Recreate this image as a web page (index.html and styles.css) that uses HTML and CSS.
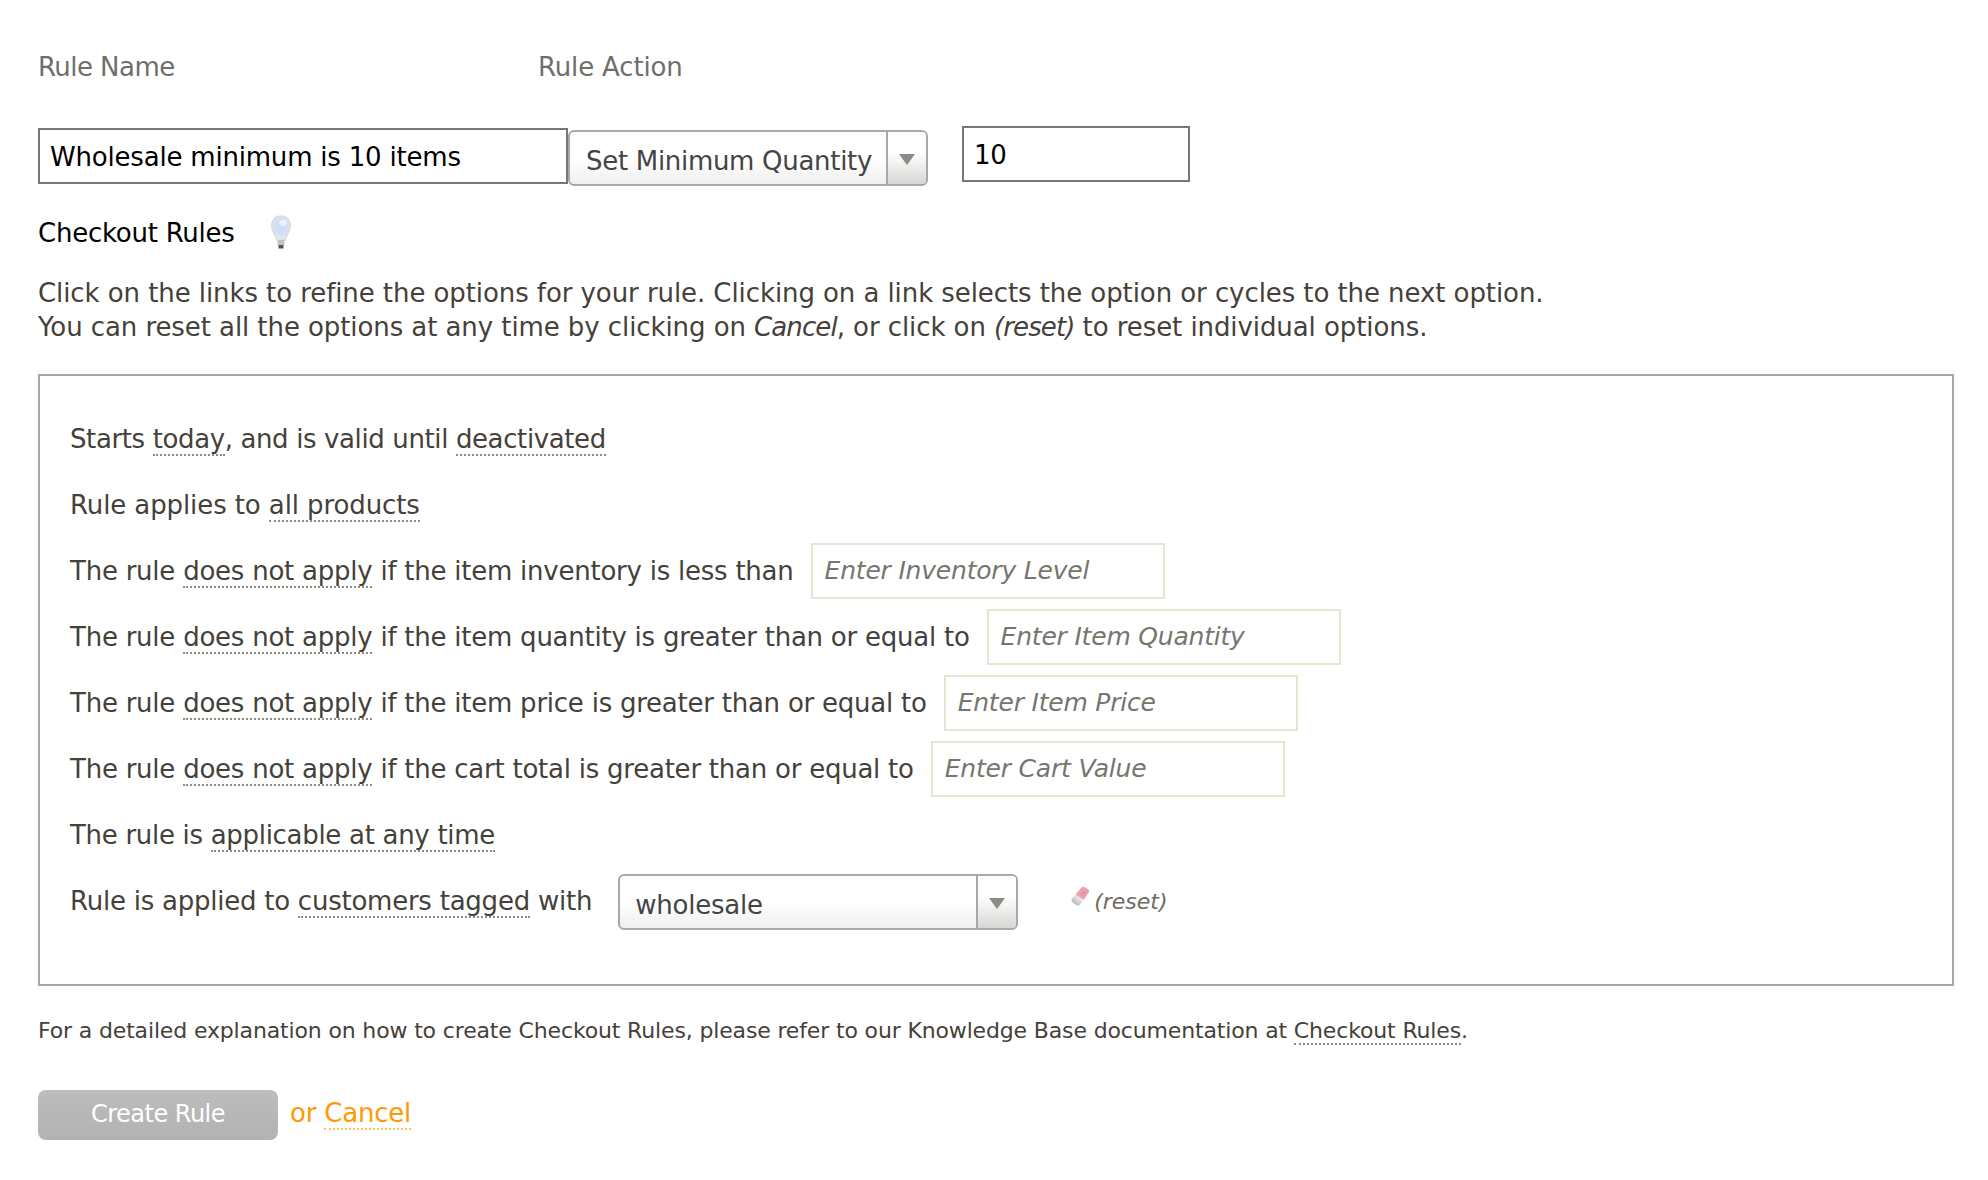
FILE: index.html
```html
<!DOCTYPE html>
<html lang="en">
<head>
<meta charset="utf-8">
<title>Checkout Rules</title>
<link rel="stylesheet" href="styles.css">
</head>
<body>
<form class="page">
  <div class="labels">
    <label class="label label-name">Rule Name</label>
    <label class="label label-action">Rule Action</label>
  </div>
  <div class="controls">
    <input class="field field-name" type="text" value="Wholesale minimum is 10 items">
    <div class="select select-action">
      <span class="select-value">Set Minimum Quantity</span>
      <span class="select-arrow"></span>
    </div>
    <input class="field field-qty" type="text" value="10">
  </div>
  <div class="heading">
    <h2 class="heading-text">Checkout Rules</h2>
    <svg class="bulb" width="26" height="34" viewBox="0 0 26 34">
      <defs>
        <radialGradient id="glass" cx="0.5" cy="0.4" r="0.6">
          <stop offset="0" stop-color="#c6dcf6"/>
          <stop offset="0.7" stop-color="#d4e3f5"/>
          <stop offset="1" stop-color="#eef0f0"/>
        </radialGradient>
      </defs>
      <path d="M13 1C7 1 3.5 5.5 3.5 11c0 5 4 8 5.5 14h8c1.500-6 5.500-9 5.500-14C22.500 5.500 19 1 13 1z" fill="url(#glass)" stroke="#dcdcd8" stroke-width="1.500"/>
      <ellipse cx="15" cy="8" rx="4" ry="3" fill="#eaf2fb"/>
      <rect x="9.500" y="25" width="7" height="5" fill="#c4c4c0"/>
      <rect x="10.500" y="30" width="5" height="3.500" fill="#55554f"/>
    </svg>
  </div>
  <p class="intro">Click on the links to refine the options for your rule. Clicking on a link selects the option or cycles to the next option.<br>You can reset all the options at any time by clicking on <em>Cancel</em>, or click on <em>(reset)</em> to reset individual options.</p>
  <div class="box">
    <div class="row row-tight"><span>Starts <a class="link">today</a>, and is valid until <a class="link">deactivated</a></span></div>
    <div class="row row-loose"><span>Rule applies to <a class="link">all products</a></span></div>
    <div class="row"><span>The rule <a class="link">does not apply</a> if the item inventory is less than</span><input class="cond" type="text" placeholder="Enter Inventory Level"></div>
    <div class="row"><span>The rule <a class="link">does not apply</a> if the item quantity is greater than or equal to</span><input class="cond" type="text" placeholder="Enter Item Quantity"></div>
    <div class="row"><span>The rule <a class="link">does not apply</a> if the item price is greater than or equal to</span><input class="cond" type="text" placeholder="Enter Item Price"></div>
    <div class="row"><span>The rule <a class="link">does not apply</a> if the cart total is greater than or equal to</span><input class="cond" type="text" placeholder="Enter Cart Value"></div>
    <div class="row row-tighter"><span>The rule is <a class="link">applicable at any time</a></span></div>
    <div class="row"><span class="row-tag">Rule is applied to <a class="link">customers tagged</a> with</span>
      <div class="select select-tag">
        <span class="select-value">wholesale</span>
        <span class="select-arrow"></span>
      </div>
      <svg class="eraser" width="22" height="24" viewBox="0 0 22 24">
        <defs>
          <linearGradient id="rub" x1="0" y1="1" x2="1" y2="0">
            <stop offset="0" stop-color="#a8a8a8"/>
            <stop offset="0.7" stop-color="#ececec"/>
          </linearGradient>
        </defs>
        <path d="M12.500 2.500c1-1 2.500-1 3.500-.3l3 2c1.200.9 1.400 2.300.7 3.300l-5.200 7.500-8-5.500z" fill="#ef9fb2"/>
        <path d="M6.500 9.500l8 5.500-2.800 4c-1 1.500-3 2-4.500 1l-3.300-2.200c-1.500-1-1.800-3-.8-4.500z" fill="url(#rub)"/>
        <path d="M12 8l2.500 1.800M14 6.500l2.500 1.800" stroke="#c57b8d" stroke-width="0.800"/>
      </svg>
      <em class="reset">(reset)</em>
    </div>
  </div>
  <p class="note">For a detailed explanation on how to create Checkout Rules, please refer to our Knowledge Base documentation at <a class="link">Checkout Rules</a>.</p>
  <div class="actions">
    <button class="submit" type="button">Create Rule</button>
    <span class="or">or <a class="link cancel">Cancel</a></span>
  </div>
</form>
</body>
</html>
```

FILE: styles.css
```css
* { box-sizing: border-box; }
html, body { margin: 0; padding: 0; background: #fff; }
body {
  font-family: "DejaVu Sans", sans-serif;
  font-size: 26px;
  color: #45413a;
  width: 1988px;
  height: 1180px;
  overflow: hidden;
}
.page { padding: 50px 34px 0 38px; display: flex; flex-direction: column; }
.labels { display: flex; height: 34px; align-items: center; }
.label { color: #6f6f6a; font-size: 26px; }
.label-name { width: 500px; letter-spacing: -0.55px; }
.label-action { letter-spacing: -0.15px; }
.controls { display: flex; align-items: flex-start; height: 60px; margin-top: 42px; }
.field {
  font: 26px "DejaVu Sans", sans-serif;
  letter-spacing: -0.2px;
  color: #000;
  height: 56px;
  background: #fff;
  border: 2px solid #777;
  padding: 2px 10px 0;
  outline: none;
  border-radius: 0;
}
.field-name { width: 530px; margin-top: 2px; }
.field-qty { width: 228px; margin-left: 34px; }
.select {
  display: flex;
  align-items: stretch;
  height: 56px;
  border: 2px solid #a8a8a8;
  border-radius: 6px;
  background: linear-gradient(#fff 50%, #efefef);
  color: #444;
}
.select-action { width: 360px; margin-top: 4px; }
.select-tag { width: 400px; margin-left: 26px; margin-top: 2px; }
.select-value { flex: 1; padding: 9px 0 0 15px; line-height: 40px; letter-spacing: -0.2px; }
.select-action .select-value { padding-left: 16px; letter-spacing: -0.3px; }
.select-arrow {
  width: 40px;
  flex: none;
  border-left: 2px solid #a8a8a8;
  border-radius: 0 4px 4px 0;
  background: linear-gradient(#fff 40%, #d6d6d4);
  position: relative;
}
.select-arrow::after {
  content: "";
  position: absolute;
  left: 11px;
  top: 22px;
  border-left: 8px solid transparent;
  border-right: 8px solid transparent;
  border-top: 11px solid #8a8a86;
}
.heading { display: flex; align-items: center; margin-top: 26px; height: 40px; }
.heading-text { margin: 2px 0 0; font-size: 26px; font-weight: normal; color: #000; letter-spacing: -0.25px; }
.bulb { margin-left: 33px; }
.intro { margin: 24px 0 0; line-height: 34px; color: #45413a; letter-spacing: -0.08px; }
.intro em { font-style: italic; letter-spacing: -0.9px; }
.box {
  margin-top: 30px;
  width: 1916px;
  height: 612px;
  border: 2px solid #a5a5a5;
  padding: 30px 0 0 30px;
}
.row { display: flex; align-items: center; height: 66px; white-space: pre; letter-spacing: -0.24px; }
.row-tight { letter-spacing: -0.38px; }
.row-tighter { letter-spacing: -0.3px; }
.row-loose { letter-spacing: -0.1px; }
.link { color: inherit; border-bottom: 2px dotted #8d8a80; }
.cond {
  font: italic 25px "DejaVu Sans", sans-serif;
  letter-spacing: -0.2px;
  width: 354px;
  height: 56px;
  margin-left: 17px;
  margin-top: -1px;
  padding: 0 12px;
  background: #fff;
  border: 2px solid #e6e6d2;
  border-radius: 0;
  outline: none;
}
.cond::placeholder { color: #77756e; opacity: 1; }
.eraser { margin-left: 51px; margin-top: -8px; }
.reset { color: #6f6b63; font-size: 22px; margin-left: 3px; letter-spacing: 0; }
.note { margin: 31px 0 0; font-size: 22px; line-height: 28px; letter-spacing: -0.15px; }
.actions { display: flex; align-items: center; margin-top: 45px; }
.submit {
  width: 240px;
  height: 50px;
  border: none;
  border-radius: 8px;
  background: linear-gradient(#bdbdbd, #b2b2b2);
  color: #fff;
  font: 24px "DejaVu Sans", sans-serif;
  letter-spacing: -0.5px;
  padding: 0 0 2px;
}
.or { color: #f90; margin-left: 12px; margin-top: -5px; letter-spacing: -0.2px; }
.cancel { border-bottom-color: #ffbe5c; }
```
